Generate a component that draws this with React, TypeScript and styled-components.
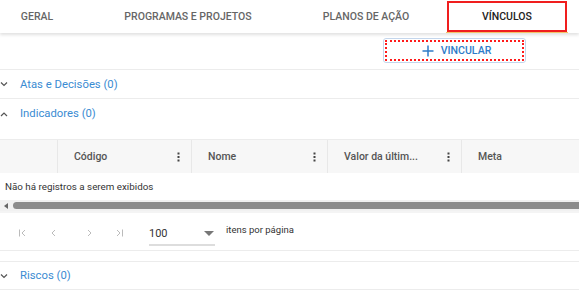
import * as React from "react";
import styled, { createGlobalStyle } from "styled-components";

const GlobalStyle = createGlobalStyle`
  html, body {
    margin: 0;
    padding: 0;
    background: #fff;
    font-family: Roboto, "Liberation Sans", Arial, sans-serif;
    overflow: hidden;
  }
`;

const tabs = [
  { label: "GERAL", width: 106 },
  { label: "PROGRAMAS E PROJETOS", width: 196 },
  { label: "PLANOS DE AÇÃO", width: 160 },
  { label: "VÍNCULOS", width: 122 },
];
const columns = [
  { label: "Código", width: 134 },
  { label: "Nome", width: 136 },
  { label: "Valor da últim...", width: 134 },
  { label: "Meta", width: 0 },
];

const Chevron: React.FC<{ up?: boolean }> = ({ up }) => (
  <svg width="8" height="6" viewBox="0 0 8 6">
    <path
      d={up ? "M1 5 L4 2 L7 5" : "M1 1.5 L4 4.5 L7 1.5"}
      fill="none"
      stroke="#555"
      strokeWidth="1.2"
    />
  </svg>
);

const Kebab = () => (
  <svg width="3" height="10" viewBox="0 0 3 10">
    <rect x="0.5" y="0.5" width="2" height="2" fill="#444" />
    <rect x="0.5" y="4" width="2" height="2" fill="#444" />
    <rect x="0.5" y="7.5" width="2" height="2" fill="#444" />
  </svg>
);

const PagerIcon: React.FC<{ kind: "first" | "prev" | "next" | "last" }> = ({ kind }) => {
  const left = kind === "first" || kind === "prev";
  const bar = kind === "first" || kind === "last";
  return (
    <svg width="10" height="10" viewBox="0 0 10 10">
      {bar && (
        <path
          d={left ? "M1.5 1.5 V8.5" : "M8.5 1.5 V8.5"}
          stroke="#bbb"
          strokeWidth="1"
        />
      )}
      <path
        d={left ? "M7 2 L4 5 L7 8" : "M3 2 L6 5 L3 8"}
        fill="none"
        stroke="#bbb"
        strokeWidth="1"
      />
    </svg>
  );
};

const App: React.FC = () => {
  return (
    <Page>
      <GlobalStyle />
      <TabBar>
        <TabList>
          {tabs.map((t, i) => (
            <Tab key={t.label} width={t.width} active={i === tabs.length - 1}>
              {t.label}
            </Tab>
          ))}
        </TabList>
      </TabBar>

      <Toolbar>
        <LinkButton>
          <svg width="12" height="12" viewBox="0 0 12 12">
            <path d="M6 0.5 V11.5 M0.5 6 H11.5" stroke="#2f7cc8" strokeWidth="1.5" />
          </svg>
          VINCULAR
        </LinkButton>
      </Toolbar>

      <SectionHeader>
        <Chevron />
        <SectionTitle>Atas e Decisões (0)</SectionTitle>
      </SectionHeader>

      <Section>
        <SectionHeader borderless>
          <Chevron up />
          <SectionTitle>Indicadores (0)</SectionTitle>
        </SectionHeader>
        <Grid>
          <GridHeader>
            <HeaderCell width={58} />
            {columns.map((c) => (
              <HeaderCell key={c.label} width={c.width}>
                <HeaderLabel>{c.label}</HeaderLabel>
                {c.width > 0 && <Kebab />}
              </HeaderCell>
            ))}
          </GridHeader>
          <EmptyRow>Não há registros a serem exibidos</EmptyRow>
          <ScrollTrack>
            <ScrollArrow />
            <ScrollThumb />
          </ScrollTrack>
          <Pager>
            <PagerButtons>
              <PagerIcon kind="first" />
              <PagerIcon kind="prev" />
              <PagerIcon kind="next" />
              <PagerIcon kind="last" />
            </PagerButtons>
            <PageSize>
              100
              <DropArrow />
            </PageSize>
            <PagerLabel>itens por página</PagerLabel>
          </Pager>
        </Grid>
      </Section>

      <SectionHeader top>
        <Chevron />
        <SectionTitle>Riscos (0)</SectionTitle>
      </SectionHeader>
    </Page>
  );
};

export default App;

const Page = styled.div`
  width: 579px;
  height: 291px;
  overflow: hidden;
  display: flex;
  flex-direction: column;
`;

const TabBar = styled.div`
  height: 33px;
  flex-shrink: 0;
  background: #fff;
  box-shadow: 0 2px 3px rgba(0, 0, 0, 0.12);
  position: relative;
  z-index: 1;
  overflow: hidden;
`;

const TabList = styled.div`
  display: flex;
  margin-left: -16px;
  height: 100%;
`;

const Tab = styled.div<{ active?: boolean; width: number }>`
  box-sizing: border-box;
  flex-shrink: 0;
  width: ${(p) => p.width}px;
  height: 100%;
  display: flex;
  align-items: center;
  justify-content: center;
  white-space: nowrap;
  font-size: 10.5px;
  font-weight: 500;
  color: ${(p) => (p.active ? "#222" : "#666")};
  border-bottom: ${(p) => (p.active ? "1px solid #f2c46a" : "1px solid transparent")};
  outline: ${(p) => (p.active ? "2px solid #f01e1e" : "none")};
  outline-offset: -3px;
`;

const Toolbar = styled.div`
  height: 37px;
  flex-shrink: 0;
  box-sizing: border-box;
  display: flex;
  justify-content: flex-end;
  align-items: flex-start;
  padding: 5px 53px 0 0;
  border-bottom: 1px solid #ececec;
`;

const LinkButton = styled.button`
  width: 143px;
  height: 25px;
  box-sizing: border-box;
  display: flex;
  align-items: center;
  justify-content: center;
  gap: 7px;
  background: #fff;
  border: 1px solid #c4d6ec;
  border-radius: 3px;
  outline: 2px dotted #ff1a1a;
  outline-offset: -4px;
  font-family: Roboto, "Liberation Sans", Arial, sans-serif;
  font-size: 10.6px;
  font-weight: 500;
  color: #2f7cc8;
  padding: 0 0 0 4px;
`;

const Section = styled.div`
  display: flex;
  flex-direction: column;
  flex-shrink: 0;
`;

const SectionHeader = styled.div<{ borderless?: boolean; top?: boolean }>`
  height: 29px;
  box-sizing: border-box;
  display: flex;
  align-items: center;
  gap: 12px;
  border-bottom: ${(p) => (p.borderless ? "none" : "1px solid #ececec")};
  border-top: ${(p) => (p.top ? "1px solid #ececec" : "none")};
  margin-top: ${(p) => (p.top ? "10px" : "0")};
  flex-shrink: 0;
`;

const SectionTitle = styled.span`
  font-size: 11.3px;
  color: #3a8bd2;
`;

const Grid = styled.div`
  margin-top: 11px;
  display: flex;
  flex-direction: column;
`;

const GridHeader = styled.div`
  display: flex;
  height: 33px;
  background: #f7f7f7;
  border-top: 1px solid #ececec;
`;

const HeaderCell = styled.div<{ width: number }>`
  box-sizing: border-box;
  ${(p) => (p.width ? `width: ${p.width}px;` : "flex: 1;")}
  display: flex;
  align-items: center;
  justify-content: space-between;
  padding: 0 11px 0 16px;
  border-right: 1px solid #e8e8e8;
  &:last-child {
    border-right: none;
  }
`;

const HeaderLabel = styled.span`
  font-size: 10.5px;
  font-weight: 500;
  color: #555;
`;

const EmptyRow = styled.div`
  height: 26px;
  display: flex;
  align-items: center;
  padding-left: 5px;
  font-size: 9.8px;
  color: #333;
`;

const ScrollTrack = styled.div`
  height: 11px;
  display: flex;
  align-items: center;
  gap: 5px;
  background: #f1f1f1;
  border-bottom: 2px solid #f4f4f4;
  padding-left: 4px;
  margin-top: 1px;
`;

const ScrollArrow = styled.div`
  width: 0;
  height: 0;
  border-top: 3px solid transparent;
  border-bottom: 3px solid transparent;
  border-right: 4px solid #666;
`;

const ScrollThumb = styled.div`
  flex: 1;
  height: 7px;
  background: #8c8c8c;
  border-radius: 4px 0 0 4px;
`;

const Pager = styled.div`
  height: 37px;
  display: flex;
  align-items: center;
  border-bottom: 1px solid #ececec;
`;

const PagerButtons = styled.div`
  width: 149px;
  box-sizing: border-box;
  display: grid;
  grid-template-columns: 30px 37px 29px 10px;
  align-items: center;
  padding-left: 18px;
  margin-top: 2px;
`;

const PageSize = styled.div`
  width: 66px;
  height: 22px;
  box-sizing: border-box;
  display: flex;
  align-items: center;
  justify-content: space-between;
  font-size: 11px;
  color: #333;
  border-bottom: 2px solid #ddd;
  margin-top: 6px;
  padding-right: 1px;
`;

const DropArrow = styled.span`
  width: 0;
  height: 0;
  border-left: 5px solid transparent;
  border-right: 5px solid transparent;
  border-top: 5px solid #777;
`;

const PagerLabel = styled.span`
  margin-left: 11px;
  margin-top: -4px;
  font-size: 9.5px;
  color: #333;
`;
